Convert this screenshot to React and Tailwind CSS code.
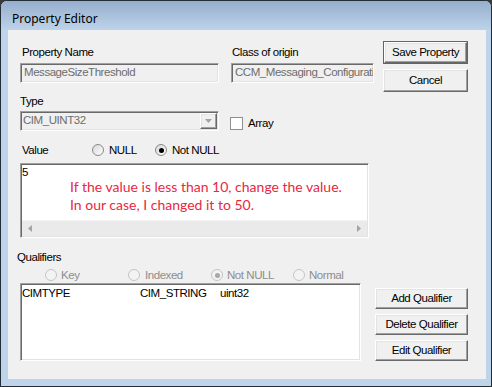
import React from "react";

const sunken =
  "border border-t-[#a0a0a0] border-l-[#a0a0a0] border-r-white border-b-white shadow-[inset_1px_1px_0_#696969,inset_-1px_-1px_0_#e3e3e3]";
const raised =
  "border border-t-white border-l-white border-r-[#696969] border-b-[#696969] shadow-[inset_-1px_-1px_0_#a0a0a0,inset_1px_1px_0_#e3e3e3]";

function Radio({ checked, disabled }) {
  return (
    <span
      className={`w-[12px] h-[12px] rounded-full border flex items-center justify-center shrink-0 ${
        disabled
          ? "border-[#c4c4c4] bg-[#f3f3f3]"
          : "border-[#8a8a8a] bg-gradient-to-br from-[#d6d6d6] to-white"
      }`}
    >
      {checked && (
        <span
          className={`w-[5px] h-[5px] rounded-full ${
            disabled ? "bg-[#a8a8a8]" : "bg-black"
          }`}
        />
      )}
    </span>
  );
}

function Button({ children, className = "", isDefault }) {
  if (isDefault) {
    return (
      <div className={`border border-[#646464] bg-[#f0f0f0] ${className}`}>
        <div className={`w-full h-full ${raised} flex items-center justify-center`}>
          {children}
        </div>
      </div>
    );
  }
  return (
    <div className={`${raised} bg-[#f0f0f0] flex items-center justify-center ${className}`}>
      {children}
    </div>
  );
}

export default function App() {
  return (
    <div className="w-[492px] h-[387px] bg-[#3a3a3a] font-['Liberation_Sans',Arial,sans-serif] text-[11.5px] tracking-[-0.45px] text-black">
      <div className="w-[492px] h-[387px] border border-[#232d36] rounded-t-[7px] overflow-hidden bg-[#bed4ea] flex flex-col">
        {/* Title bar */}
        <div className="h-[29px] shrink-0 bg-gradient-to-b from-[#96afcd] to-[#bdd3ea] pl-[11px] pt-[10px]">
          <span className="font-['Noto_Sans',sans-serif] text-[12px] leading-[16px] tracking-normal text-black">
            Property Editor
          </span>
        </div>
        {/* Body frame */}
        <div className="flex-1 pl-[7px] pr-[5px] pb-[7px]">
          <div className="w-[478px] h-[349px] bg-[#f0f0f0] flex flex-col pl-[12px]">
            {/* Top section */}
            <div className="flex">
              <div className="w-[363px] flex flex-col">
                <div className="flex mt-[15px] gap-[12px]">
                  <div className="flex flex-col w-[199px]">
                    <span className="h-[14px] leading-[14px] pl-[2px]">Property Name</span>
                    <div
                      className={`mt-[4px] h-[20px] ${sunken} bg-[#f0f0f0] text-[#6d6d6d] pl-[3px] leading-[17px] whitespace-nowrap overflow-hidden`}
                    >
                      MessageSizeThreshold
                    </div>
                  </div>
                  <div className="flex flex-col w-[143px]">
                    <span className="h-[14px] leading-[14px] pl-[1px]">Class of origin</span>
                    <div
                      className={`mt-[4px] h-[20px] ${sunken} bg-[#f0f0f0] text-[#6d6d6d] pl-[3px] leading-[17px] whitespace-nowrap overflow-hidden`}
                    >
                      CCM_Messaging_Configuration
                    </div>
                  </div>
                </div>

                <span className="mt-[11px] h-[14px] leading-[14px]">Type</span>
                <div className="mt-[3px] flex items-start">
                  <div
                    className={`w-[199px] h-[20px] ${sunken} bg-[#f0f0f0] flex items-center justify-between pl-[2px] pr-[1px]`}
                  >
                    <span className="text-[#6d6d6d]">CIM_UINT32</span>
                    <div className={`w-[17px] h-[16px] ${raised} bg-[#f0f0f0] flex items-center justify-center`}>
                      <svg width="7" height="4" viewBox="0 0 7 4">
                        <path d="M0 0H7L3.5 4Z" fill="#a3a3a3" />
                      </svg>
                    </div>
                  </div>
                  <span className="ml-[11px] mt-[6px] w-[13px] h-[13px] border border-[#8e8f8f] bg-white shrink-0" />
                  <span className="ml-[5px] mt-[5px] h-[14px] leading-[14px]">Array</span>
                </div>

                <div className="mt-[12px] h-[14px] flex items-center">
                  <span className="ml-[2px] w-[70px] leading-[14px]">Value</span>
                  <Radio />
                  <span className="ml-[5px] w-[46px] leading-[14px]">NULL</span>
                  <Radio checked />
                  <span className="ml-[5px] leading-[14px]">Not NULL</span>
                </div>
              </div>

              <div className="mt-[11px] flex flex-col gap-[5px] w-[85px]">
                <Button isDefault className="h-[23px]">Save Property</Button>
                <Button className="h-[23px]">Cancel</Button>
              </div>
            </div>

            {/* Value box */}
            <div className={`mt-[6px] w-[349px] h-[75px] ${sunken} bg-white flex flex-col`}>
              <div className="flex-1 relative pl-[1px] pt-[1px]">
                <div className="leading-[14px]">5</div>
                <div className="pl-[48px] mt-[-1px] font-['Lato',sans-serif] text-[14px] leading-[18px] tracking-normal text-[#e8283f]">
                  <div>If the value is less than 10, change the value.</div>
                  <div>In our case, I changed it to 50.</div>
                </div>
              </div>
              <div className="h-[16px] mx-[1px] mb-[1px] bg-[#eaeaea] border-t border-[#f4f4f4] flex items-center justify-between px-[6px]">
                <svg width="4" height="7" viewBox="0 0 4 7">
                  <path d="M4 0V7L0 3.5Z" fill="#a3a3a3" />
                </svg>
                <svg width="4" height="7" viewBox="0 0 4 7">
                  <path d="M0 0V7L4 3.5Z" fill="#a3a3a3" />
                </svg>
              </div>
            </div>

            {/* Qualifiers */}
            <span className="mt-[12px] ml-[-3px] h-[14px] leading-[14px]">Qualifiers</span>
            <div className="mt-[5px] ml-[25px] h-[12px] flex items-center text-[#8d8d8d]">
              <div className="w-[83px] flex items-center gap-[4px]">
                <Radio disabled />
                <span className="leading-[12px]">Key</span>
              </div>
              <div className="w-[83px] flex items-center gap-[5px]">
                <Radio disabled />
                <span className="leading-[12px]">Indexed</span>
              </div>
              <div className="w-[82px] flex items-center gap-[4px]">
                <Radio disabled checked />
                <span className="leading-[12px]">Not NULL</span>
              </div>
              <div className="flex items-center gap-[4px]">
                <Radio disabled />
                <span className="leading-[12px]">Normal</span>
              </div>
            </div>

            <div className="mt-[2px] flex">
              <div className={`w-[341px] h-[78px] ${sunken} bg-white pt-[2px]`}>
                <div className="flex leading-[14px] pl-[1px]">
                  <span className="w-[118px]">CIMTYPE</span>
                  <span className="w-[80px]">CIM_STRING</span>
                  <span>uint32</span>
                </div>
              </div>
              <div className="ml-[14px] mt-[5px] flex flex-col gap-[5px] w-[93px]">
                <Button className="h-[21px]">Add Qualifier</Button>
                <Button className="h-[21px]">Delete Qualifier</Button>
                <Button className="h-[21px]">Edit Qualifier</Button>
              </div>
            </div>
          </div>
        </div>
      </div>
    </div>
  );
}
